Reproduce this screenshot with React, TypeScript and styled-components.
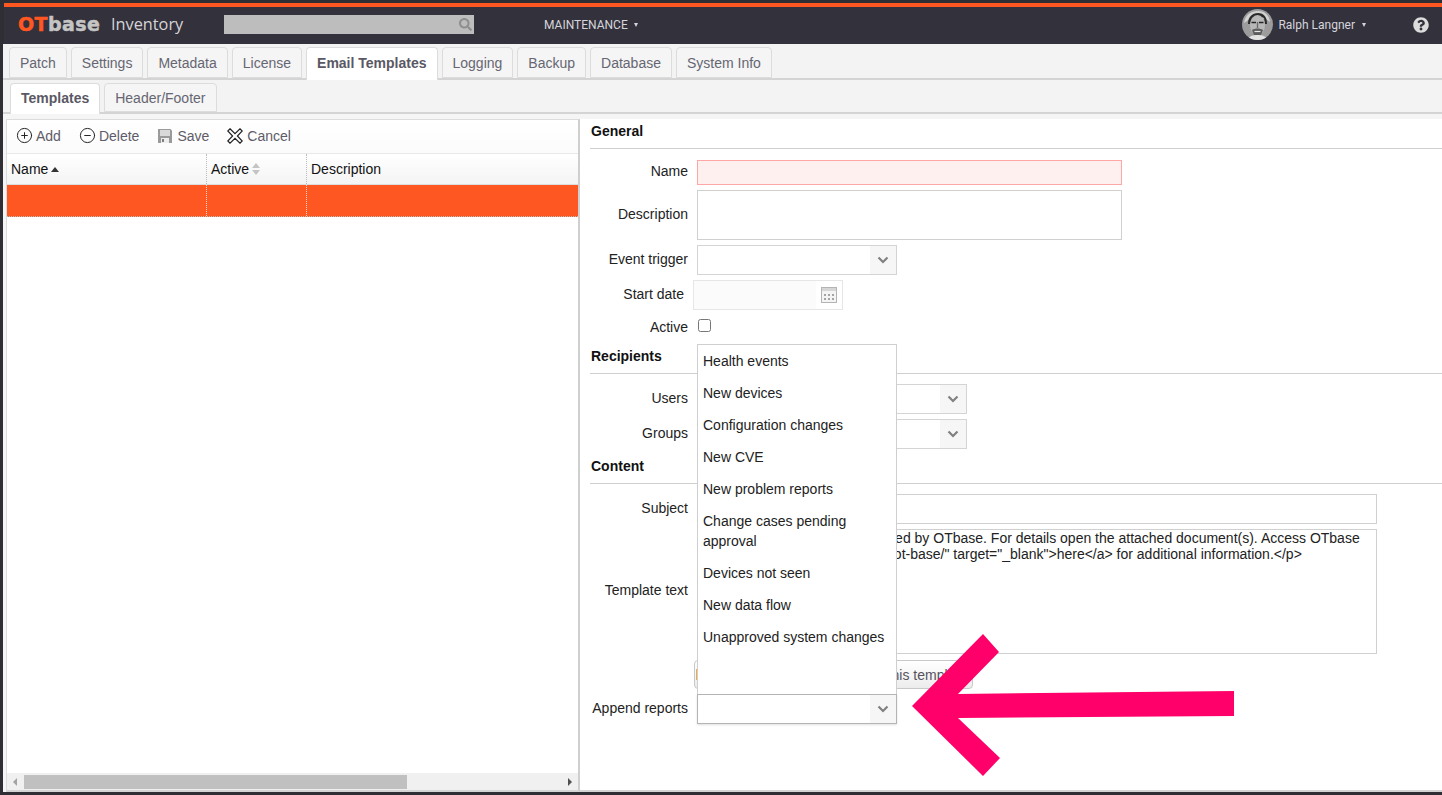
import React from 'react'
import styled, { createGlobalStyle } from 'styled-components'
import { CirclePlus, CircleMinus } from 'lucide-react'
import { FaSearch, FaQuestionCircle } from 'react-icons/fa'

const GlobalStyle = createGlobalStyle`
  html, body {
    margin: 0;
    padding: 0;
    background: #2f2e35;
    overflow: hidden;
  }
  * {
    box-sizing: border-box;
  }
`

const Page = styled.div`
  position: relative;
  width: 1442px;
  height: 795px;
  padding: 3px 0 3px 3px;
  background: #2f2e35;
  font-family: 'Liberation Sans', Arial, sans-serif;
  font-size: 14px;
  color: #222;
  overflow: hidden;
  display: flex;
  flex-direction: column;
`

const Header = styled.header`
  height: 41px;
  flex: none;
  margin-left: 1px;
  padding-bottom: 2px;
  border-top: 4px solid #ff5722;
  background: #33313b;
  display: flex;
  align-items: center;
  color: #dcdde2;
`

const Logo = styled.div`
  margin-left: 14px;
  width: 93px;
  font-family: 'DejaVu Sans', sans-serif;
  font-weight: 700;
  font-size: 19px;
  line-height: 20px;
  margin-top: -1px;
  letter-spacing: 0.45px;
  color: #c4c4c4;
  -webkit-text-stroke: 0.5px currentColor;
  span {
    color: #ff5722;
  }
`

const ProductName = styled.div`
  width: 113px;
  margin-top: -2px;
  font-family: 'Open Sans', sans-serif;
  font-size: 16.3px;
  color: #d5d5d8;
`

const SearchBox = styled.div`
  width: 250px;
  height: 19px;
  background: #bdbdbd;
  display: flex;
  align-items: center;
  justify-content: flex-end;
  padding-right: 2px;
  color: #8f8f8f;
  font-size: 13px;
`

const MenuLabel = styled.div`
  margin-left: 70px;
  font-family: 'Roboto', sans-serif;
  font-size: 12px;
  color: #d5d6db;
  display: flex;
  align-items: center;
  gap: 6px;
`

const Caret = styled.span`
  width: 0;
  height: 0;
  border-left: 2.5px solid transparent;
  border-right: 2.5px solid transparent;
  border-top: 4px solid #d5d6db;
`

const UserBlock = styled.div`
  margin-left: auto;
  display: flex;
  align-items: center;
  font-family: 'Roboto', sans-serif;
  font-size: 12px;
  color: #d5d6db;
`

const UserName = styled.span`
  margin: 0 7px 0 5px;
`

const HelpIcon = styled(FaQuestionCircle)`
  margin: 0 13px 0 47px;
  font-size: 16px;
  color: #dcdcdc;
`

const Workspace = styled.div`
  flex: 1;
  min-height: 0;
  background: #f3f3f3;
  display: flex;
  flex-direction: column;
`

const TabBar = styled.div<{ $height: number; $left: number }>`
  height: ${(p) => p.$height}px;
  flex: none;
  padding: 3px 0 0 ${(p) => p.$left}px;
  border-bottom: 2px solid #d4d4d4;
  display: flex;
  gap: 4px;
`

const Tab = styled.div<{ $active?: boolean }>`
  padding: 0 10px ${(p) => (p.$active ? '2px' : '0')};
  display: flex;
  align-items: center;
  border: 1px solid #dcdcdc;
  border-bottom: ${(p) => (p.$active ? 'none' : '1px solid #dcdcdc')};
  border-radius: 4px 4px 0 0;
  background: ${(p) => (p.$active ? '#fff' : '#f5f5f5')};
  font-weight: ${(p) => (p.$active ? 700 : 400)};
  color: ${(p) => (p.$active ? '#5a5864' : '#666672')};
  margin-bottom: ${(p) => (p.$active ? '-2px' : '0')};
  height: ${(p) => (p.$active ? 'calc(100% + 2px)' : '100%')};
`

const Panels = styled.div`
  flex: 1;
  min-height: 0;
  display: flex;
  padding-top: 5px;
  background: #f5f5f5;
`

const ListPane = styled.section`
  width: 574px;
  margin-left: 3px;
  flex: none;
  border-top: 1px solid #dcdcdc;
  border-left: 1px solid #dcdcdc;
  border-right: 2px solid #cfcfcf;
  border-bottom: 2px solid #d4d4d4;
  background: #fff;
  display: flex;
  flex-direction: column;
`

const Toolbar = styled.div`
  height: 33px;
  flex: none;
  padding: 0 0 2px 9px;
  display: flex;
  align-items: center;
  gap: 18px;
  background: linear-gradient(#fff, #fbfbfb);
  color: #5e5c68;
`

const ToolButton = styled.div<{ $gap?: number }>`
  display: flex;
  align-items: center;
  gap: ${(p) => p.$gap ?? 3}px;
  svg {
    flex: none;
  }
`

const GridRow = styled.div<{ $selected?: boolean }>`
  height: 32px;
  flex: none;
  display: grid;
  grid-template-columns: 199px 100px 1fr;
  background: ${(p) => (p.$selected ? '#ff5722' : 'linear-gradient(#fff, #f4f4f4)')};
  border-top: ${(p) => (p.$selected ? 'none' : '1px solid #e8e8e8')};
  border-bottom: ${(p) => (p.$selected ? '1px dotted #bbb' : '1px solid #ddd')};
`

const GridCell = styled.div<{ $selected?: boolean; $first?: boolean }>`
  display: flex;
  align-items: center;
  padding-left: 4px;
  color: #111;
  gap: 3px;
  border-left: ${(p) =>
    p.$first ? 'none' : `1px dotted ${p.$selected ? '#ffd9cc' : '#bbb'}`};
`

const SortUp = styled.span<{ $muted?: boolean }>`
  display: block;
  width: 0;
  height: 0;
  border-left: 4.5px solid transparent;
  border-right: 4.5px solid transparent;
  border-bottom: 5px solid ${(p) => (p.$muted ? '#c4c4c4' : '#333')};
`

const SortDown = styled(SortUp)`
  margin-top: 2px;
  transform: rotate(180deg);
`

const GridBody = styled.div`
  flex: 1;
`

const ScrollBar = styled.div`
  height: 17px;
  flex: none;
  background: #f0f0f0;
  display: flex;
  align-items: center;
  padding: 0 6px;
`

const ScrollArrow = styled.span<{ $dir: 'left' | 'right' }>`
  width: 0;
  height: 0;
  border-top: 4px solid transparent;
  border-bottom: 4px solid transparent;
  ${(p) =>
    p.$dir === 'left'
      ? 'border-right: 4px solid #a3a3a3;'
      : 'border-left: 4px solid #505050; margin-left: auto;'}
`

const ScrollThumb = styled.div`
  width: 383px;
  height: 14px;
  margin-left: 7px;
  background: #c0c0c0;
`

const FormPane = styled.section`
  flex: 1;
  min-width: 0;
  background: #fff;
  padding: 1px 0 0 10px;
  border-bottom: 2px solid #d4d4d4;
`

const SectionTitle = styled.div<{ $top?: number }>`
  height: 29px;
  margin-top: ${(p) => p.$top ?? 0}px;
  padding: 3px 0 0 1px;
  border-bottom: 1px solid #cfcfcf;
  font-weight: 700;
  line-height: 16px;
  color: #111;
`

const Rows = styled.div<{ $top: number }>`
  padding-top: ${(p) => p.$top}px;
  display: flex;
  flex-direction: column;
  gap: 5px;
`

const Row = styled.div<{ $height?: number }>`
  display: flex;
  align-items: center;
  gap: 9px;
  height: ${(p) => (p.$height ? `${p.$height}px` : 'auto')};
`

const Label = styled.label<{ $width?: number; $lift?: number }>`
  width: ${(p) => p.$width ?? 98}px;
  flex: none;
  text-align: right;
  line-height: 16px;
  margin-top: ${(p) => p.$lift ?? -2}px;
  color: #222;
`

const TextField = styled.input<{ $invalid?: boolean }>`
  display: block;
  width: ${(p) => (p.$invalid ? '425px' : '680px')};
  height: ${(p) => (p.$invalid ? 25 : 30)}px;
  padding: 0 4px;
  border: 1px solid ${(p) => (p.$invalid ? '#ffa6a6' : '#d0d0d0')};
  background: ${(p) => (p.$invalid ? '#fff0f0' : '#fff')};
  outline: none;
`

const TextBlock = styled.textarea<{ $width: number; $height: number }>`
  display: block;
  width: ${(p) => p.$width}px;
  height: ${(p) => p.$height}px;
  padding: 0 1px;
  border: 1px solid #d0d0d0;
  background: #fff;
  font-family: inherit;
  font-size: 14px;
  line-height: 16px;
  color: #222;
  resize: none;
  outline: none;
  overflow: hidden;
`

const Combo = styled.div<{ $width: number; $focused?: boolean; $muted?: boolean }>`
  position: relative;
  width: ${(p) => p.$width}px;
  height: 30px;
  display: flex;
  justify-content: flex-end;
  border: 1px solid ${(p) => (p.$focused ? '#b4b4b4' : p.$muted ? '#e6e6e6' : '#d4d4d4')};
  background: ${(p) => (p.$muted ? '#fbfbfb' : '#fff')};
  box-shadow: ${(p) => (p.$focused ? '0 1px 2px rgba(0,0,0,0.12)' : 'none')};
`

const ComboButton = styled.span<{ $muted?: boolean }>`
  width: 26px;
  display: flex;
  align-items: center;
  justify-content: center;
  background: ${(p) => (p.$muted ? '#fff' : '#f6f6f6')};
`

const Popup = styled.ul`
  position: absolute;
  left: -1px;
  right: -1px;
  bottom: calc(100% + 1px);
  height: 350px;
  margin: 0;
  padding: 0;
  list-style: none;
  background: #fff;
  border: 1px solid #cfcfcf;
  border-bottom: none;
  z-index: 2;
`

const PopupItem = styled.li`
  padding: 6px 5px;
  line-height: 20px;
  color: #222;
`

const CheckBox = styled.input`
  margin: -3px 0 0 1px;
  width: 13px;
  height: 13px;
`

const ActionButton = styled.button`
  width: 279px;
  height: 29px;
  margin: 1px 0 0 -3px;
  padding: 0 5px 0 1px;
  display: flex;
  align-items: center;
  justify-content: space-between;
  border: 1px solid #c8c8c8;
  border-radius: 4px;
  background: linear-gradient(#fff, #ececec);
  font-family: inherit;
  font-size: 14px;
  color: #55535e;
`

const ButtonMark = styled.span`
  width: 12px;
  height: 11px;
  background: #f2a94e;
`

const PointerArrow = styled.svg`
  position: absolute;
  left: 0;
  top: 0;
  width: 1442px;
  height: 795px;
  pointer-events: none;
  z-index: 5;
`

const topTabs = [
  'Patch',
  'Settings',
  'Metadata',
  'License',
  'Email Templates',
  'Logging',
  'Backup',
  'Database',
  'System Info',
]

const reportTypes = [
  'Health events',
  'New devices',
  'Configuration changes',
  'New CVE',
  'New problem reports',
  'Change cases pending approval',
  'Devices not seen',
  'New data flow',
  'Unapproved system changes',
]

const templateText =
  '<p>These reports were generated by OTbase. For details open the attached document(s). Access OTbase on the network <a href="https://ot-base/" target="_blank">here</a> for additional information.</p>'

function Chevron() {
  return (
    <svg width='12' height='8' viewBox='0 0 12 8'>
      <path d='M1.5 1.5 6 6l4.5-4.5' fill='none' stroke='#808080' strokeWidth='2.2' />
    </svg>
  )
}

function SaveIcon() {
  return (
    <svg width='16' height='16' viewBox='0 0 16 16'>
      <path d='M1 1h12.500L15 2.500V15H1z' fill='#9a9a9a' />
      <rect x='3' y='2' width='10' height='6' fill='#d9d9d9' />
      <rect x='4' y='10' width='8' height='5' fill='#ededed' />
      <rect x='5' y='11' width='2' height='3' fill='#808080' />
    </svg>
  )
}

function CancelIcon() {
  return (
    <svg width='16' height='16' viewBox='0 0 16 16'>
      <path
        d='M3 .8 8 5.600 13 .8 15.200 3 10.400 8l4.800 5-2.200 2.200L8 10.400l-5 4.800L.8 13l4.800-5L.8 3z'
        fill='#fff'
        stroke='#222'
        strokeWidth='1.200'
      />
    </svg>
  )
}

function CalendarIcon() {
  return (
    <svg width='16' height='16' viewBox='0 0 16 16'>
      <rect x='.5' y='.5' width='15' height='15' fill='#f4f4f4' stroke='#b4b4b4' />
      <rect x='1' y='1' width='14' height='3' fill='#d6d6d6' />
      <path
        d='M3 7h2v2H3zM7 7h2v2H7zM11 7h2v2h-2zM3 11h2v2H3zM7 11h2v2H7zM11 11h2v2h-2z'
        fill='#a4a4a4'
      />
    </svg>
  )
}

function Avatar() {
  return (
    <svg width='31' height='31' viewBox='0 0 31 31'>
      <defs>
        <clipPath id='avatar-clip'>
          <circle cx='15.5' cy='15.5' r='15.5' />
        </clipPath>
        <filter id='avatar-soft'>
          <feGaussianBlur stdDeviation='0.55' />
        </filter>
      </defs>
      <g clipPath='url(#avatar-clip)'>
        <rect width='31' height='31' fill='#9c9c9c' />
        <g filter='url(#avatar-soft)'>
          <path d='M2 14C3 6 9 2 16 2s11 4 12 11l-4-3-8-2-8 2z' fill='#d2d2d2' />
          <path d='M6 15C6 8 10 4 16 4s9 4 9 11l-2 0-1-6-6-2-6 2-2 6z' fill='#2c2c2c' />
          <ellipse cx='15.5' cy='16' rx='7.500' ry='10' fill='#b8b8b8' />
          <path d='M9.500 13.500h4.500M17 13.500h4.500' stroke='#262626' strokeWidth='1.600' />
          <path d='M15.500 13v6' stroke='#6c6c6c' strokeWidth='1.400' />
          <path d='M10 21c3-2 8-2 11 0l-2 5h-7z' fill='#5c5c5c' />
          <path d='M12.500 22.500h6' stroke='#e6e6e6' strokeWidth='1.200' />
          <path d='M5 31c2-4 6-5 10.500-5S24 27 26 31z' fill='#e2e2e2' />
        </g>
      </g>
    </svg>
  )
}

export default function App() {
  return (
    <Page>
      <GlobalStyle />
      <Header>
        <Logo>
          <span>OT</span>base
        </Logo>
        <ProductName>Inventory</ProductName>
        <SearchBox>
          <FaSearch />
        </SearchBox>
        <MenuLabel>
          MAINTENANCE <Caret />
        </MenuLabel>
        <UserBlock>
          <Avatar />
          <UserName>Ralph Langner</UserName>
          <Caret />
          <HelpIcon />
        </UserBlock>
      </Header>
      <Workspace>
        <TabBar $height={36} $left={6}>
          {topTabs.map((tab) => (
            <Tab key={tab} $active={tab === 'Email Templates'}>
              {tab}
            </Tab>
          ))}
        </TabBar>
        <TabBar $height={34} $left={7}>
          <Tab $active>Templates</Tab>
          <Tab>Header/Footer</Tab>
        </TabBar>
        <Panels>
          <ListPane>
            <Toolbar>
              <ToolButton>
                <CirclePlus size={17} strokeWidth={1.4} color='#222' />
                Add
              </ToolButton>
              <ToolButton>
                <CircleMinus size={17} strokeWidth={1.4} color='#222' />
                Delete
              </ToolButton>
              <ToolButton $gap={4}>
                <SaveIcon />
                Save
              </ToolButton>
              <ToolButton $gap={4}>
                <CancelIcon />
                Cancel
              </ToolButton>
            </Toolbar>
            <GridRow>
              <GridCell $first>
                Name <SortUp />
              </GridCell>
              <GridCell>
                Active
                <span>
                  <SortUp $muted />
                  <SortDown $muted />
                </span>
              </GridCell>
              <GridCell>Description</GridCell>
            </GridRow>
            <GridRow $selected>
              <GridCell $selected $first />
              <GridCell $selected />
              <GridCell $selected />
            </GridRow>
            <GridBody />
            <ScrollBar>
              <ScrollArrow $dir='left' />
              <ScrollThumb />
              <ScrollArrow $dir='right' />
            </ScrollBar>
          </ListPane>
          <FormPane>
            <SectionTitle>General</SectionTitle>
            <Rows $top={11}>
              <Row>
                <Label $lift={-4}>Name</Label>
                <TextField $invalid />
              </Row>
              <Row>
                <Label>Description</Label>
                <TextBlock $width={425} $height={50} />
              </Row>
              <Row>
                <Label>Event trigger</Label>
                <Combo $width={200}>
                  <ComboButton>
                    <Chevron />
                  </ComboButton>
                </Combo>
              </Row>
              <Row>
                <Label $width={94}>Start date</Label>
                <Combo $width={150} $muted>
                  <ComboButton $muted>
                    <CalendarIcon />
                  </ComboButton>
                </Combo>
              </Row>
              <Row $height={24}>
                <Label $lift={0}>Active</Label>
                <CheckBox type='checkbox' />
              </Row>
            </Rows>
            <SectionTitle $top={6}>Recipients</SectionTitle>
            <Rows $top={10}>
              <Row>
                <Label>Users</Label>
                <Combo $width={270}>
                  <ComboButton>
                    <Chevron />
                  </ComboButton>
                </Combo>
              </Row>
              <Row>
                <Label>Groups</Label>
                <Combo $width={270}>
                  <ComboButton>
                    <Chevron />
                  </ComboButton>
                </Combo>
              </Row>
            </Rows>
            <SectionTitle $top={6}>Content</SectionTitle>
            <Rows $top={10}>
              <Row>
                <Label>Subject</Label>
                <TextField />
              </Row>
              <Row>
                <Label $lift={-4}>Template text</Label>
                <TextBlock $width={680} $height={125} readOnly defaultValue={templateText} />
              </Row>
              <Row>
                <Label />
                <ActionButton type='button'>
                  <ButtonMark />
                  Send test email using this template
                </ActionButton>
              </Row>
              <Row>
                <Label>Append reports</Label>
                <Combo $width={200} $focused>
                  <ComboButton>
                    <Chevron />
                  </ComboButton>
                  <Popup>
                    {reportTypes.map((report) => (
                      <PopupItem key={report}>{report}</PopupItem>
                    ))}
                  </Popup>
                </Combo>
              </Row>
            </Rows>
          </FormPane>
        </Panels>
      </Workspace>
      <PointerArrow viewBox='0 0 1442 795'>
        <polygon
          points='912,706 983,634 999,652 958,694 1234,691 1234,716 958,718 1000,758 983,776'
          fill='#ff006a'
        />
      </PointerArrow>
    </Page>
  )
}
